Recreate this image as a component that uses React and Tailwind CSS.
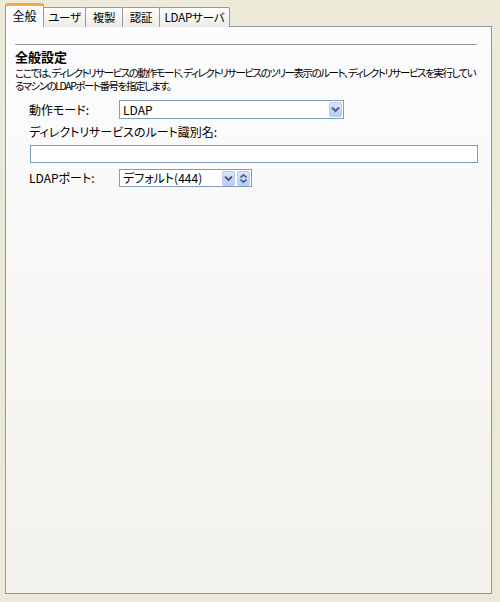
const font = { fontFamily: '"Noto Sans CJK JP", "Noto Sans", sans-serif' };

const Chevron = () => (
  <svg width="9" height="7" viewBox="0 0 9 7">
    <path d="M1 1.5 L4.5 5 L8 1.5" fill="none" stroke="#4d6185" strokeWidth="2" />
  </svg>
);

const DropButton = () => (
  <div className="flex h-[15px] w-[13px] items-center justify-center rounded-[2px] border border-[#b9c9ef] bg-gradient-to-b from-[#dbe6fd] to-[#b7cbf8]">
    <Chevron />
  </div>
);

const Spinner = () => (
  <div className="flex h-[15px] w-[13px] flex-col items-center justify-center gap-[1px] rounded-[2px] border border-[#b9c9ef] bg-gradient-to-b from-[#dbe6fd] to-[#b7cbf8]">
    <svg width="7" height="4" viewBox="0 0 7 4">
      <path d="M0.5 3.5 L3.5 0.8 L6.5 3.5" fill="none" stroke="#4d6185" strokeWidth="1.6" />
    </svg>
    <svg width="7" height="4" viewBox="0 0 7 4">
      <path d="M0.5 0.5 L3.5 3.2 L6.5 0.5" fill="none" stroke="#4d6185" strokeWidth="1.6" />
    </svg>
  </div>
);

const tabs = [
  { label: 'ユーザ', w: 'w-[43px]' },
  { label: '複製', w: 'w-[38px]' },
  { label: '認証', w: 'w-[38px]' },
  { label: 'LDAPサーバ', w: 'w-[71px]' },
];

export default function App() {
  return (
    <div
      className="h-[602px] w-[500px] overflow-hidden bg-[#ece9d8] pt-[3px] text-[12px] text-black"
      style={{ ...font, fontFeatureSettings: '"palt"' }}
    >
      {/* Tabs */}
      <div className="flex h-[24px] items-end pl-[5px]">
        <div className="relative z-10 flex h-[24px] w-[39px] shrink-0 items-center justify-center rounded-t-[3px] border-x border-t-[3px] border-x-[#919b9c] border-t-[#f6a93b] bg-[#fcfcfe] pb-[1px]">
          全般
        </div>
        {tabs.map((t) => (
          <div
            key={t.label}
            className={`${t.w} ml-[-1px] flex h-[20px] shrink-0 items-center justify-center whitespace-nowrap rounded-t-[2px] border border-b-0 border-[#919b9c] bg-gradient-to-b from-white to-[#ecebe6] text-[11.5px] tracking-[-0.2px]`}
          >
            {t.label}
          </div>
        ))}
      </div>

      {/* Panel */}
      <div className="ml-[5px] -mt-px h-[568px] w-[487px] border border-[#919b9c] border-r-[#8d9596] border-b-[#8d9596] bg-gradient-to-b from-[#fcfcfe] to-[#f3f2ec] pl-[9px] pr-[14px] pt-[17px]">
        <div className="h-px bg-[#9a9a9a]" />
        <div className="mt-[3px] text-[13px] font-bold leading-[17px]">全般設定</div>
        <div className="mt-[1px] whitespace-nowrap text-[10.5px] leading-[13px] tracking-[-1.45px]">
          <div>ここでは、ディレクトリサービスの動作モード、ディレクトリサービスのツリー表示のルート、ディレクトリサービスを実行してい</div>
          <div>るマシンのLDAPポート番号を指定します。</div>
        </div>

        <div className="mt-[8px] flex items-center pl-[14px]">
          <span className="w-[90px]">動作モード:</span>
          <div className="flex h-[19px] w-[225px] items-center justify-between border border-[#7f9db9] bg-white pl-[3px] pr-[1px]">
            <span>LDAP</span>
            <DropButton />
          </div>
        </div>

        <div className="mt-[5px] pl-[14px] leading-[16px]">ディレクトリサービスのルート識別名:</div>
        <div className="ml-[15px] mt-[5px] h-[18px] w-[448px] border border-[#7f9db9] bg-white" />

        <div className="mt-[6px] flex items-center pl-[14px]">
          <span className="w-[90px]">LDAPポート:</span>
          <div className="flex h-[18px] w-[133px] items-center border border-[#7f9db9] bg-white pl-[3px] pr-[1px]">
            <span className="flex-1">デフォルト(444)</span>
            <DropButton />
            <div className="w-[2px]" />
            <Spinner />
          </div>
        </div>
      </div>
    </div>
  );
}
